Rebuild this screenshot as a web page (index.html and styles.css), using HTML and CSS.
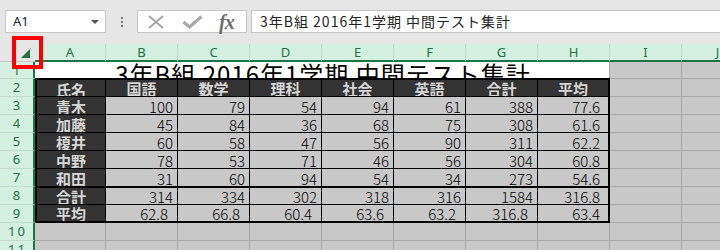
FILE: index.html
```html
<!DOCTYPE html>
<html lang="ja">
<head>
<meta charset="utf-8">
<title>中間テスト集計</title>
<link rel="stylesheet" href="styles.css">
</head>
<body>
<div class="app">
  <div class="toolbar">
    <div class="namebox"><span class="name">A1</span><span class="caret"></span></div>
    <div class="dots"><i></i><i></i><i></i></div>
    <div class="fxbox">
      <svg class="ico-x" width="18" height="14" viewBox="0 0 18 14"><path d="M2 1 L16 13 M16 1 L2 13" stroke="#a6a6a6" stroke-width="2" fill="none"/></svg>
      <svg class="ico-ok" width="21" height="14" viewBox="0 0 21 14"><path d="M1.5 7 L7.5 12 L19.5 1.5" stroke="#a9a9a9" stroke-width="3.2" fill="none"/></svg>
      <span class="fx">fx</span>
    </div>
    <div class="formula">3年B組 2016年1学期 中間テスト集計</div>
  </div>

  <div class="sheet">
    <div class="corner"><svg width="33" height="18" viewBox="0 0 33 18"><polygon points="30,5 30,14 21,14" fill="#217346"/></svg></div>
    <div class="colhead">A</div>
    <div class="colhead">B</div>
    <div class="colhead">C</div>
    <div class="colhead">D</div>
    <div class="colhead">E</div>
    <div class="colhead">F</div>
    <div class="colhead">G</div>
    <div class="colhead">H</div>
    <div class="colhead">I</div>
    <div class="colhead">J</div>

    <div class="rowhead">1</div>
    <div class="rowhead">2</div>
    <div class="rowhead">3</div>
    <div class="rowhead">4</div>
    <div class="rowhead">5</div>
    <div class="rowhead">6</div>
    <div class="rowhead">7</div>
    <div class="rowhead">8</div>
    <div class="rowhead">9</div>
    <div class="rowhead">10</div>
    <div class="rowhead">11</div>

    <div class="cells"></div>
    <div class="title">3年B組 2016年1学期 中間テスト集計</div>

    <div class="table">
      <div class="row head"><div>氏名</div><div>国語</div><div>数学</div><div>理科</div><div>社会</div><div>英語</div><div>合計</div><div>平均</div></div>
      <div class="row"><div>青木</div><div>100</div><div>79</div><div>54</div><div>94</div><div>61</div><div>388</div><div>77.6</div></div>
      <div class="row"><div>加藤</div><div>45</div><div>84</div><div>36</div><div>68</div><div>75</div><div>308</div><div>61.6</div></div>
      <div class="row"><div>榎井</div><div>60</div><div>58</div><div>47</div><div>56</div><div>90</div><div>311</div><div>62.2</div></div>
      <div class="row"><div>中野</div><div>78</div><div>53</div><div>71</div><div>46</div><div>56</div><div>304</div><div>60.8</div></div>
      <div class="row"><div>和田</div><div>31</div><div>60</div><div>94</div><div>54</div><div>34</div><div>273</div><div>54.6</div></div>
      <div class="row sum"><div>合計</div><div>314</div><div>334</div><div>302</div><div>318</div><div>316</div><div>1584</div><div>316.8</div></div>
      <div class="row avg"><div>平均</div><div>62.8</div><div>66.8</div><div>60.4</div><div>63.6</div><div>63.2</div><div>316.8</div><div>63.4</div></div>
    </div>
  </div>

  <div class="callout"></div>
</div>
</body>
</html>
```

FILE: styles.css
```css
* { box-sizing: border-box; }
html, body { margin: 0; padding: 0; }
body {
  width: 720px;
  height: 250px;
  overflow: hidden;
  background: #e6e6e6;
  font-family: "Noto Sans CJK JP", "Noto Sans", sans-serif;
}
.app { position: relative; width: 720px; height: 250px; overflow: hidden; }

/* formula bar */
.toolbar {
  height: 44px;
  display: flex;
  align-items: flex-start;
  padding: 10px 0 0 5px;
  background: #e6e6e6;
}
.namebox {
  width: 101px;
  height: 23px;
  background: #fff;
  border: 1px solid #c6c6c6;
  display: flex;
  align-items: center;
  justify-content: space-between;
  padding: 0 6px 0 7px;
}
.name { font-family: "Noto Sans", sans-serif; font-size: 13px; color: #222; line-height: 1; }
.caret {
  width: 0; height: 0;
  border-left: 4px solid transparent;
  border-right: 4px solid transparent;
  border-top: 4px solid #555;
}
.dots {
  width: 31px;
  height: 23px;
  display: flex;
  flex-direction: column;
  align-items: center;
  justify-content: center;
  gap: 2px;
}
.dots i { display: block; width: 2px; height: 2px; background: #777; }
.fxbox {
  width: 110px;
  height: 23px;
  background: #fff;
  border: 1px solid #c6c6c6;
  display: flex;
  align-items: center;
  padding-left: 9px;
}
.ico-ok { margin-left: 17px; }
.fx {
  margin-left: 16px;
  font-family: "Liberation Serif", serif;
  font-style: italic;
  font-weight: bold;
  font-size: 20px;
  color: #6d6d6d;
  line-height: 1;
  letter-spacing: -1px;
}
.formula {
  flex: 1;
  margin-left: 4px;
  height: 23px;
  background: #fff;
  border: 1px solid #c6c6c6;
  border-right: none;
  padding-left: 8px;
  font-size: 14px;
  line-height: 21px;
  letter-spacing: 1px;
  color: #222;
  white-space: nowrap;
}

/* sheet */
.sheet {
  width: 720px;
  height: 206px;
  overflow: hidden;
  display: grid;
  grid-template-columns: 35px 71px repeat(9, 72px);
  grid-template-rows: 18px 17px repeat(10, 18px);
}
.corner {
  background: #e6e6e6;
  border-bottom: 1px solid #c6c6c6;
}
.corner svg { display: block; }
.colhead {
  background: #d3f0e0;
  border-right: 1px solid #bcd9c8;
  border-bottom: 2px solid #217346;
  color: #217346;
  font-family: "Noto Sans", sans-serif;
  font-size: 13px;
  line-height: 16px;
  text-align: center;
}
.rowhead {
  grid-column: 1;
  background: #d3f0e0;
  border-right: 2px solid #217346;
  border-bottom: 1px solid #c2dccd;
  color: #217346;
  font-family: "Noto Sans", sans-serif;
  font-size: 13px;
  letter-spacing: 2px;
  text-indent: 2px;
  line-height: 17px;
  text-align: center;
}
.cells {
  grid-column: 2 / -1;
  grid-row: 2 / -1;
  background-color: #c8c8c8;
  background-image:
    linear-gradient(to left, #a9a9a9 1px, transparent 1px),
    linear-gradient(to top, #a9a9a9 1px, transparent 1px);
  background-size: 72px 18px;
  background-position: -1px -1px;
}
.title {
  grid-column: 2 / 10;
  grid-row: 2;
  margin-right: 1px;
  background: #fff;
  overflow: hidden;
  text-align: center;
  font-size: 24px;
  line-height: 24px;
  letter-spacing: 1px;
  color: #000;
  white-space: nowrap;
  padding-left: 2px;
}

/* data table */
.table {
  grid-column: 2 / 10;
  grid-row: 3 / 11;
  margin-top: -1px;
  height: 145px;
  display: grid;
  grid-template-columns: 68px repeat(6, 71px) 70px;
  grid-template-rows: 16px repeat(5, 17px) 17px 16px;
  gap: 1px;
  background: #000;
  border: 2px solid #000;
}
.row { display: contents; }
.row > div {
  background: #c8c8c8;
  color: #000;
  font-size: 15px;
  font-weight: 300;
  line-height: 17px;
  padding-top: 1px;
  text-align: right;
  padding-right: 4px;
  white-space: nowrap;
  overflow: hidden;
}
.row > div:first-child,
.row.head > div {
  background: #333333;
  color: #d6d6d6;
  font-weight: bold;
  text-align: center;
  padding-right: 0;
  line-height: 16px;
  padding-top: 1px;
}
.row > div:first-child { line-height: 17px; padding-top: 1px; }
.row > div:last-child { padding-right: 8px; }
.row.head > div:last-child { padding-right: 0; }
.row.sum > div { border-top: 1px solid #000; line-height: 15px; }
.row.avg > div { padding-right: 9px; line-height: 16px; }
.row.avg > div:first-child { padding-right: 0; }
.row.avg > div:last-child { padding-right: 8px; }

/* red annotation frame over the select-all corner */
.callout {
  position: absolute;
  left: 12px;
  top: 36px;
  width: 31px;
  height: 33px;
  border: 4px solid #ff0000;
}
```
